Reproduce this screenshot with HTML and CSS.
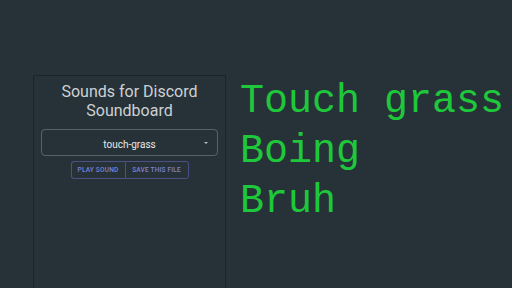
FILE: index.html
```html
<!DOCTYPE html>
<html lang="en">
<head>
<meta charset="UTF-8">
<meta name="viewport" content="width=device-width, initial-scale=1.0">
<title>Sounds for Discord Soundboard</title>
<link rel="stylesheet" href="styles.css">
</head>
<body>
<div class="page">
  <section class="panel">
    <h1 class="title">Sounds for Discord Soundboard</h1>
    <div class="select">
      <span class="select-value">touch-grass</span>
      <span class="select-arrow"></span>
    </div>
    <div class="buttons">
      <button class="btn">Play sound</button>
      <button class="btn">Save this file</button>
    </div>
  </section>
  <div class="sounds">
    <p>Touch grass</p>
    <p>Boing</p>
    <p>Bruh</p>
  </div>
</div>
</body>
</html>
```

FILE: styles.css
```css
body {
  margin: 0;
  background-color: #263238;
  font-family: Roboto, "Noto Sans", sans-serif;
  overflow: hidden;
}
.page {
  display: flex;
  padding: 75px 0 0 33px;
  gap: 14px;
  height: 213px;
}
.panel {
  width: 191px;
  border: 1px solid #1b2429;
  border-bottom: none;
  padding-top: 6px;
}
.title {
  margin: 0;
  font-size: 16px;
  line-height: 19px;
  font-weight: 400;
  color: #cdd1d3;
  text-align: center;
}
.select {
  position: relative;
  margin: 9px 7px 0 7px;
  height: 25px;
  border: 1px solid #58626a;
  border-radius: 4px;
  display: flex;
  align-items: center;
  justify-content: center;
}
.select-value {
  font-size: 10px;
  font-weight: 400;
  color: #e6e8e9;
  margin-top: 3px;
}
.select-arrow {
  position: absolute;
  right: 9px;
  top: 12px;
  border-left: 2.5px solid transparent;
  border-right: 2.5px solid transparent;
  border-top: 2.5px solid #b9bec1;
}
.buttons {
  display: flex;
  justify-content: center;
  margin-top: 5px;
}
.btn {
  height: 18px;
  padding: 0;
  background: none;
  border: 1px solid #4b5184;
  font-family: Roboto, sans-serif;
  font-size: 6.5px;
  font-weight: 500;
  text-transform: uppercase;
  white-space: nowrap;
  color: #7c84d6;
  letter-spacing: 0.2px;
}
.btn:first-child {
  border-radius: 3px 0 0 3px;
  border-right: none;
  width: 54px;
}
.btn:last-child {
  border-radius: 0 3px 3px 0;
  width: 64px;
}
.sounds {
  font-family: "Liberation Mono", "Courier New", monospace;
  font-size: 40px;
  color: #1fc83b;
  padding-top: 2px;
}
.sounds p {
  margin: 0;
  line-height: 50px;
  white-space: nowrap;
}
```
